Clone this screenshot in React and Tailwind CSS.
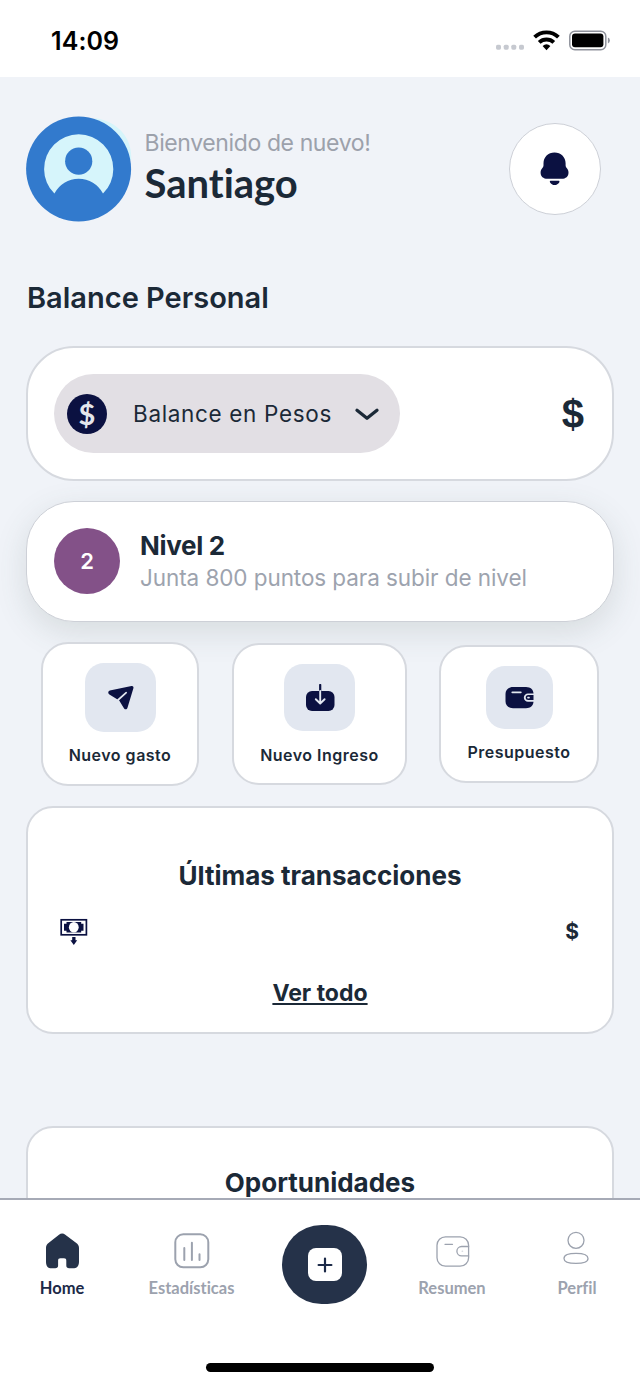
import React from "react";

function StatusBar() {
  return (
    <div className="flex h-[77px] shrink-0 items-start justify-between bg-white pr-[30px] pl-[51px] pt-[25px]">
      <span className="text-[25px] leading-8 font-semibold tracking-[0.1px] text-black">14:09</span>
      <svg className="mt-[3px]" width="114" height="26" viewBox="496 28 114 26">
        <g fill="#c6c9d0">
          <rect x="496" y="44.700" width="5" height="5" rx="1.6" />
          <rect x="503.700" y="44.700" width="5" height="5" rx="1.6" />
          <rect x="511.300" y="44.700" width="5" height="5" rx="1.6" />
          <rect x="519" y="44.700" width="5" height="5" rx="1.6" />
        </g>
        <g fill="none" stroke="#000" strokeWidth="3.9">
          <path d="M534.6 37.2a17.2 17.2 0 0 1 23.8 0" />
          <path d="M539.2 42.4a10.6 10.6 0 0 1 14.6 0" />
        </g>
        <path d="M542.6 46a6 6 0 0 1 7.8 0l-3.9 4.2Z" fill="#000" />
        <rect x="569.8" y="31.300" width="36" height="18.400" rx="5" fill="none" stroke="#8f929b" strokeWidth="1.5" />
        <rect x="572" y="33.600" width="31.400" height="13.600" rx="3" fill="#000" />
        <path d="M607.900 37.600q2 .6 2 2.900t-2 2.900Z" fill="#8f929b" />
      </svg>
    </div>
  );
}

function Avatar() {
  return (
    <svg width="106" height="106" viewBox="26 116 106 106">
      <path d="M95 118C108 120 117 126 122.500 132.500C129 140 131.500 149 131.300 160L112 160Z" fill="#d6f5fb" />
      <circle cx="78.600" cy="169" r="52.500" fill="#327acd" />
      <path d="M54.400 193.600A34.600 34.600 0 1 1 103 193.600A27.300 27.300 0 0 0 54.400 193.600Z" fill="#d6f5fb" />
      <circle cx="78.700" cy="161.200" r="13.600" fill="#327acd" />
    </svg>
  );
}

function Header() {
  return (
    <div className="flex h-[106px] items-start pr-[39px] pl-[26px]">
      <Avatar />
      <div className="ml-[12.500px] flex flex-col pt-[13px] whitespace-nowrap">
        <span className="text-[23px] leading-[28px] font-normal tracking-[-0.39px] text-[#9ca1ab]">Bienvenido de nuevo!</span>
        <span className="font-['Lato',sans-serif] text-[40px] leading-[53px] font-bold text-[#1b2937] [font-variant-ligatures:none]">Santiago</span>
      </div>
      <div className="mt-[7px] ml-auto flex h-[92px] w-[92px] items-center justify-center rounded-full border-[1.500px] border-[#cdd0d7] bg-white">
        <svg width="30" height="36" viewBox="540 151 30 36" fill="#0b1141">
          <path d="M554.500 152.500c-6.400 0-11 4.600-11 10.800v1.600c0 1.500-.4 2.200-1.300 3.300-1.100 1.300-1.600 2.600-1.600 4.200 0 4 2.600 6.300 7 6.300h13.900c4.400 0 7-2.300 7-6.300 0-1.600-.5-2.900-1.600-4.200-.9-1.100-1.300-1.800-1.300-3.300v-1.600c0-6.200-4.700-10.800-11.100-10.800Z" />
          <path d="M551 180.700h7.300c1.200 0 1.500.7.900 1.700-.9 1.500-2.600 2.600-4.600 2.600s-3.600-1.100-4.500-2.600c-.6-1-.3-1.700.9-1.700Z" />
        </svg>
      </div>
    </div>
  );
}

function BalanceCard() {
  return (
    <div className="relative flex h-[135px] items-center rounded-[48px] border-2 border-[#d6d9df] bg-white pr-[28px] pl-[26px]">
      <div className="flex h-[79px] w-[346px] items-center rounded-[40px] bg-[#e2dfe4] pl-[13px]">
        <div className="flex h-10 w-10 items-center justify-center rounded-full bg-[#0b1141] font-['Lato',sans-serif] text-[29px] leading-10 font-bold text-[#e4e6ec]">$</div>
        <span className="ml-[26px] text-[22.500px] leading-8 tracking-[0.660px] whitespace-nowrap text-[#1b2937]">Balance en Pesos</span>
        <svg className="ml-auto mr-[19px]" width="28" height="16" viewBox="0 0 28 16" fill="none" stroke="#1b2937" strokeWidth="3.300" strokeLinecap="round" strokeLinejoin="round">
          <path d="M4 4.200 14 12.200 24 4.200" />
        </svg>
      </div>
      <span className="ml-auto font-['Liberation_Sans',sans-serif] text-[40px] leading-10 font-bold text-[#1b2937]">$</span>
    </div>
  );
}

function LevelCard() {
  return (
    <div className="mt-5 flex h-[121px] items-center rounded-[48px] border-[1.500px] border-[#cdd0d7] bg-white pb-px pl-[27px] shadow-[0_10px_32px_rgba(70,85,80,0.150)]">
      <div className="flex h-[66px] w-[66px] items-center justify-center rounded-full bg-[#835188] text-[22px] font-semibold text-white">2</div>
      <div className="ml-5 flex flex-col whitespace-nowrap">
        <span className="text-[26px] leading-[33px] font-bold tracking-[-0.3px] text-[#1b2937]">Nivel 2</span>
        <span className="text-[22.500px] leading-[32px] tracking-[-0.080px] text-[#9da3ae]">Junta 800 puntos para subir de nivel</span>
      </div>
    </div>
  );
}

function SendIcon() {
  return (
    <svg className="ml-px" width="28" height="26" viewBox="106.500 685 28 26">
      <path d="M131 686c1.500-.3 2.300.8 1.900 2.200l-6 19.800c-.5 1.600-2.300 1.800-3.300.4l-4.900-7.900-9.800-5.900c-1.700-1.100-1.500-3.500.4-4.100Z" fill="#0b1141" />
      <path d="M117.500 700 125.700 692.700" stroke="#e2e7f0" strokeWidth="1.700" strokeLinecap="round" fill="none" />
    </svg>
  );
}

function DownloadIcon() {
  return (
    <svg className="ml-px" width="30" height="28" viewBox="304.500 684 30 28">
      <rect x="305.500" y="691" width="28.500" height="20" rx="6" fill="#0b1141" />
      <path d="M319.700 685V692" stroke="#0b1141" strokeWidth="2.200" strokeLinecap="round" />
      <path d="M319.700 691v12.300M315.300 699.200l4.400 4.300 4.400-4.300" fill="none" stroke="#e2e7f0" strokeWidth="1.900" strokeLinecap="round" strokeLinejoin="round" />
    </svg>
  );
}

function WalletIcon() {
  return (
    <svg className="ml-px" width="29" height="23" viewBox="505 686 29 23">
      <path d="M513 687h13c4.500 0 7.500 2.800 7.500 6.500h-5.500a4 4 0 0 0 0 8.300h5.500c-.3 3.900-3 6.400-7.500 6.400h-13c-4.500 0-7.500-3-7.500-7v-7.200c0-4 3-7 7.500-7Z" fill="#0b1141" />
      <path d="M533.500 695.100h-5.300a2.500 2.500 0 0 0 0 5h5.300Z" fill="#0b1141" />
      <path d="M512.300 692.300h8.500" stroke="#e2e7f0" strokeWidth="1.800" strokeLinecap="round" />
      <path d="M528 697.600h1" stroke="#e2e7f0" strokeWidth="1.700" strokeLinecap="round" />
    </svg>
  );
}

function Actions() {
  const tile = "flex flex-col items-center rounded-[27px] border-2 border-[#d6d9df] bg-white pt-[19px]";
  const label = "text-[16px] leading-5 font-semibold whitespace-nowrap text-[#1b2937] tracking-[0.5px]";
  return (
    <div className="relative mt-[20px] flex h-[144px] items-center pl-[15px] pr-[15px]">
      <div className={`${tile} h-[144px] w-[158px]`}>
        <div className="flex h-[69px] w-[71px] items-center justify-center rounded-[19px] bg-[#e2e7f0]"><SendIcon /></div>
        <span className={`${label} mt-[13px]`}>Nuevo gasto</span>
      </div>
      <div className={`${tile} ml-[33px] h-[142px] w-[175px]`}>
        <div className="mr-px flex h-[67px] w-[71px] items-center justify-center rounded-[19px] bg-[#e2e7f0]"><DownloadIcon /></div>
        <span className={`${label} mt-[14px]`}>Nuevo Ingreso</span>
      </div>
      <div className={`${tile} ml-auto h-[138px] w-[160px]`}>
        <div className="flex h-[63px] w-[67px] items-center justify-center rounded-[19px] bg-[#e2e7f0]"><WalletIcon /></div>
        <span className={`${label} mt-[13px]`}>Presupuesto</span>
      </div>
    </div>
  );
}

function Transactions() {
  return (
    <div className="mt-5 flex h-[228px] shrink-0 flex-col items-center rounded-[27px] border-2 border-[#d6d9df] bg-white pt-[52px]">
      <h2 className="text-[26px] leading-8 font-bold whitespace-nowrap text-[#1b2937]">Últimas transacciones</h2>
      <div className="mt-[24px] flex h-8 w-full items-center justify-between pr-[33px] pl-[32px]">
        <svg width="28" height="28" viewBox="60 918 28 28">
          <rect x="61.200" y="919.800" width="25.200" height="15" fill="#fff" stroke="#0b1141" strokeWidth="1.700" />
          <path d="M66.500 922h14.700v1.800h2.300v6.900h-2.300v1.800H66.500v-1.800h-2.500v-6.900h2.500Z" fill="#0b1141" />
          <ellipse cx="73.800" cy="927.200" rx="4.900" ry="5.300" fill="#fff" />
          <path d="M72.200 937h3.300v3.200h1.700l-3.400 4.700-3.400-4.700h1.800Z" fill="#0b1141" />
        </svg>
        <span className="text-[21px] leading-8 font-bold text-[#1b2937]">$</span>
      </div>
      <a className="mt-[28.500px] text-[23px] leading-8 font-bold whitespace-nowrap text-[#1b2937] underline decoration-[2px] underline-offset-[2px]">Ver todo</a>
    </div>
  );
}

function Opportunities() {
  return (
    <div className="mt-[92px] flex h-[229px] shrink-0 flex-col items-center rounded-[27px] border-2 border-[#d6d9df] bg-white pt-[39px]">
      <h2 className="text-[26px] leading-8 font-bold text-[#1b2937]">Oportunidades</h2>
    </div>
  );
}

function Tab({ className, label, active, children }) {
  return (
    <div className={`flex flex-col items-center ${className}`}>
      <div className="flex h-[40px] items-center justify-center">{children}</div>
      <span className={`mt-[7px] font-['Lato',sans-serif] text-[16.500px] leading-5 font-bold whitespace-nowrap ${active ? "text-[#1c2a48]" : "text-[#9ca2ae]"}`}>{label}</span>
    </div>
  );
}

function NavBar() {
  return (
    <div className="flex h-[187px] shrink-0 flex-col border-t-2 border-[#a6aab6] bg-white">
      <div className="flex h-[110px] items-start pt-[31px] [font-variant-ligatures:none]">
        <Tab className="ml-[22px] w-20" label="Home" active>
          <svg width="34" height="36" viewBox="45 1233.500 34 36" fill="#253249">
            <path d="M59 1235.200c1.900-1.500 4.400-1.500 6.300 0l11 8.200c1.800 1.400 2.700 2.800 2.700 5v13.800c0 4.300-2.100 6.600-6.200 6.600h-3.600c-1.900 0-2.900-1-2.900-2.800v-4.800c0-1.700-.8-2.400-2.300-2.400h-3.600c-1.500 0-2.300.7-2.300 2.400v4.800c0 1.800-1 2.800-2.900 2.800h-3.400c-4 0-5.800-2.300-5.800-6.600v-13.800c0-2.200.7-3.600 2.500-5Z" />
          </svg>
        </Tab>
        <Tab className="ml-[39.500px] w-[100px]" label="Estadísticas">
          <svg width="36" height="36" viewBox="0 0 36 36" fill="none" stroke="#9ca2ae" strokeWidth="2" strokeLinecap="round">
            <rect x="1.300" y="1.300" width="33" height="33" rx="8" />
            <path d="M10.300 15V27M17.900 9.700V27M25.500 21.200V27" />
          </svg>
        </Tab>
        <div className="-mt-[6px] ml-[40.500px] flex h-[79px] w-[85px] items-center justify-center rounded-[40px] bg-[#253249]">
          <div className="flex h-[33px] w-[34px] items-center justify-center rounded-[8px] bg-white">
            <svg width="16" height="16" viewBox="0 0 16 16" stroke="#1c2a48" strokeWidth="2.200" strokeLinecap="round">
              <path d="M8 1.600V14.400M1.600 8H14.400" />
            </svg>
          </div>
        </div>
        <Tab className="ml-[45px] w-20" label="Resumen">
          <svg className="ml-px" width="34" height="31" viewBox="0 0 34 31" fill="none" stroke="#9ca2ae" strokeWidth="1.300" strokeLinecap="round">
            <rect x="1" y="0.800" width="31.600" height="29.400" rx="8.500" />
            <path d="M32.600 10.500h-7a4.700 4.700 0 0 0 0 9.400h7M9 8.300h7.500" />
            <path d="M26.200 15.200h.3" strokeWidth="1.500" opacity=".4" />
          </svg>
        </Tab>
        <Tab className="ml-[45px] w-20" label="Perfil">
          <svg className="mr-[2px] mb-[6px]" width="28" height="34" viewBox="0 0 28 34" fill="none" stroke="#9ca2ae" strokeWidth="1.300">
            <circle cx="14" cy="9.300" r="8" />
            <path d="M14 22.400c-7.700 0-12 1.600-12 5s4.300 5 12 5 12-1.600 12-5-4.300-5-12-5Z" />
          </svg>
        </Tab>
      </div>
      <div className="mx-auto mt-[53px] h-[9px] w-[228px] rounded-full bg-black" />
    </div>
  );
}

export default function App() {
  return (
    <div className="flex h-[1385px] w-[640px] flex-col overflow-hidden bg-[#f0f3f8] font-['Inter',sans-serif]">
      <StatusBar />
      <main className="min-h-0 flex-1 overflow-hidden pt-[39px]">
        <Header />
        <div className="mt-[56px] flex flex-col px-[26px]">
          <h1 className="mb-[28px] pl-px text-[29px] leading-[40px] font-semibold whitespace-nowrap text-[#1b2937]">Balance Personal</h1>
          <BalanceCard />
          <LevelCard />
          <Actions />
          <Transactions />
          <Opportunities />
        </div>
      </main>
      <NavBar />
    </div>
  );
}
